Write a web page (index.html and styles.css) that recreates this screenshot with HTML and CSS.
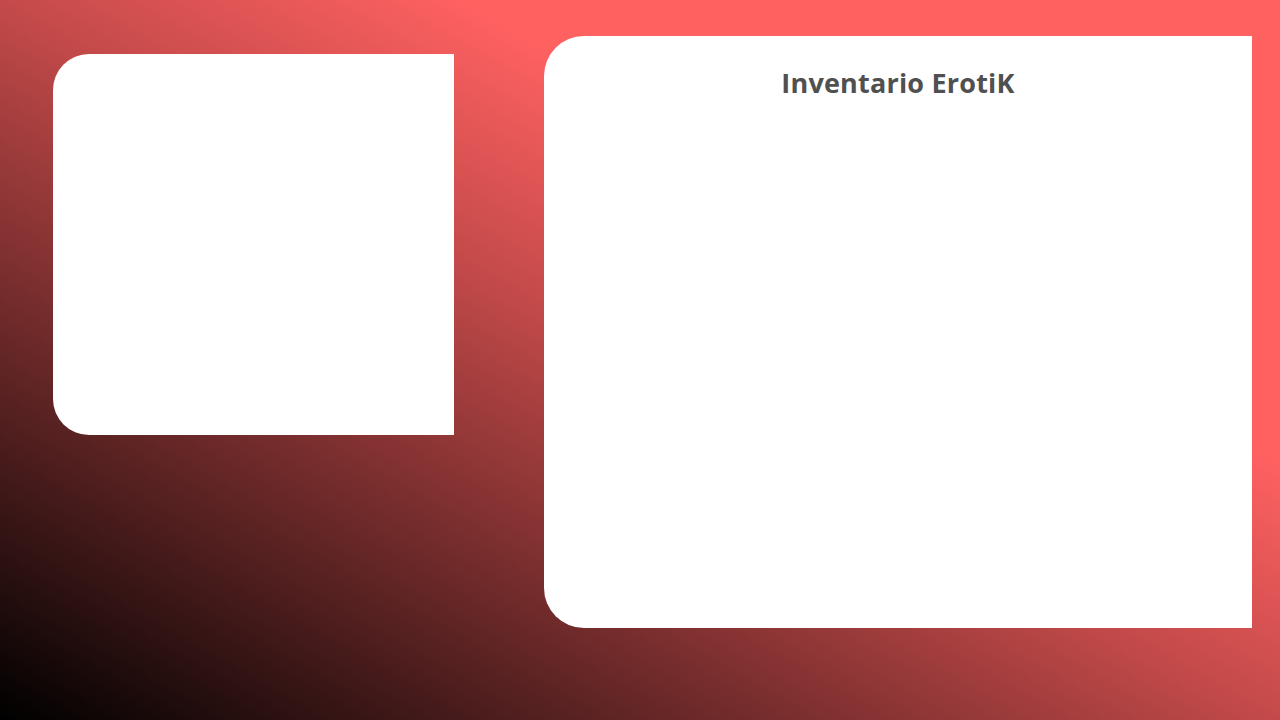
FILE: index.html
```html
<!DOCTYPE html>
<html lang="es">
<head>
<meta charset="utf-8">
<title>Inventario ErotiK</title>
<link rel="stylesheet" href="styles.css">
</head>
<body>
<main class="page">
  <section class="card card-side"></section>
  <section class="card card-main">
    <h1 class="title">Inventario ErotiK</h1>
  </section>
</main>
</body>
</html>
```

FILE: styles.css
```css
html, body {
  margin: 0;
  padding: 0;
  width: 1280px;
  height: 720px;
  overflow: hidden;
}

body {
  background: linear-gradient(to top right, #000000 0%, #c44a4a 50%, #ff6161 68%, #ff6161 100%);
  font-family: "Open Sans", "Liberation Sans", sans-serif;
}

.page {
  display: flex;
  align-items: flex-start;
  padding-left: 53px;
  gap: 90px;
}

.card {
  background: #ffffff;
  border-radius: 36px 0 0 36px;
}

.card-side {
  width: 401px;
  height: 381px;
  margin-top: 54px;
}

.card-main {
  width: 708px;
  height: 592px;
  margin-top: 36px;
  border-radius: 40px 0 0 40px;
  display: flex;
  flex-direction: column;
  align-items: center;
}

.title {
  margin: 27px 0 0;
  font-size: 27px;
  line-height: 40px;
  font-weight: 700;
  color: #505050;
  letter-spacing: 0.2px;
}
```
